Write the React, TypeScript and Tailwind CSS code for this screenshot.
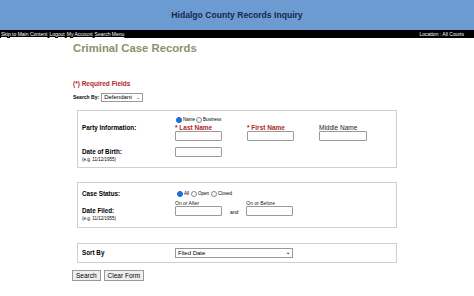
import React from "react";

const F = { fontFamily: '"Liberation Sans", Arial, sans-serif' };

function Radio({ checked }: { checked?: boolean }) {
  return (
    <span
      className={
        "inline-block w-[6px] h-[6px] rounded-full border " +
        (checked ? "border-[#1a5fc4] bg-[#1a73e8]" : "border-[#888] bg-white")
      }
    />
  );
}

function Input({ w = "w-[47px]" }: { w?: string }) {
  return <div className={`${w} h-[10px] border border-[#999] rounded-[1px] bg-white`} />;
}

export default function App() {
  return (
    <div className="w-[474px] h-[296px] bg-white overflow-hidden text-black" style={F}>
      <div className="h-[30px] bg-[#6c9bd2] flex items-center justify-center">
        <span className="text-[8.6px] font-bold text-[#16284a]">Hidalgo County Records Inquiry</span>
      </div>
      <div className="h-[8px] bg-black flex items-center justify-between text-white text-[5px] leading-none px-[1px]">
        <div className="flex gap-[2px]">
          <span className="underline">Skip to Main Content</span>
          <span className="underline">Logout</span>
          <span className="underline">My Account</span>
          <span className="underline">Search Menu</span>
        </div>
        <span className="mr-[9px]">Location : All Courts</span>
      </div>
      <div className="pl-[73px]">
        <div className="mt-[3px] text-[11.3px] font-bold text-[#8f8f6c] leading-[14px]">Criminal Case Records</div>
        <div className="mt-[25px] text-[6.5px] font-bold text-[#b3262b] leading-[8px]">(*) Required Fields</div>
        <div className="mt-[5px] flex items-center gap-[2px]">
          <span className="text-[5px] font-bold">Search By:</span>
          <div className="h-[9px] w-[42px] border border-[#999] flex items-center justify-between px-[2px] text-[6px]">
            <span>Defendant</span>
            <span className="text-[5px]">&#8964;</span>
          </div>
        </div>
        {/* Box 1 */}
        <div className="ml-[4px] mt-[8px] w-[320px] h-[58px] border border-[#cfcfcf] flex flex-col px-[4px]">
          <div className="flex mt-[6px]">
            <div className="w-[93px] text-[6.3px] font-bold pt-[6px]">Party Information:</div>
            <div className="flex flex-col">
              <div className="flex items-center gap-[1px] text-[4.5px] leading-none ml-[1px]">
                <Radio checked />
                <span>Name</span>
                <Radio />
                <span>Business</span>
              </div>
              <div className="flex gap-[25px] mt-[1px]">
                <div className="flex flex-col">
                  <span className="text-[6.5px] font-bold text-[#b3262b] leading-[7px]">* Last Name</span>
                  <Input />
                </div>
                <div className="flex flex-col">
                  <span className="text-[6.5px] font-bold text-[#b3262b] leading-[7px]">* First Name</span>
                  <Input />
                </div>
                <div className="flex flex-col">
                  <span className="text-[6.5px] leading-[7px] text-[#222]">Middle Name</span>
                  <Input w="w-[48px]" />
                </div>
              </div>
            </div>
          </div>
          <div className="flex mt-[6px]">
            <div className="w-[93px] flex flex-col">
              <span className="text-[6.3px] font-bold leading-[8px] mt-[1px]">Date of Birth:</span>
              <span className="text-[4.5px] leading-[6px] mt-[1px]">(e.g. 11/12/1955)</span>
            </div>
            <Input />
          </div>
        </div>
        {/* Box 2 */}
        <div className="ml-[4px] mt-[14px] w-[320px] h-[46px] border border-[#cfcfcf] flex flex-col px-[4px]">
          <div className="flex mt-[7px] items-center">
            <div className="w-[93px] text-[6.3px] font-bold leading-[8px]">Case Status:</div>
            <div className="flex items-center gap-[1px] text-[4.5px] leading-none ml-[2px]">
              <Radio checked />
              <span className="mr-[1px]">All</span>
              <Radio />
              <span className="mr-[1px]">Open</span>
              <Radio />
              <span>Closed</span>
            </div>
          </div>
          <div className="flex mt-[2px]">
            <div className="w-[93px] flex flex-col pt-[7px]">
              <span className="text-[6.3px] font-bold leading-[8px]">Date Filed:</span>
              <span className="text-[4.5px] leading-[6px] mt-[1px]">(e.g. 11/12/1955)</span>
            </div>
            <div className="flex flex-col">
              <span className="text-[5px] leading-[6px] text-[#222]">On or After</span>
              <Input />
            </div>
            <span className="text-[5px] mx-[8px] mt-[9px]">and</span>
            <div className="flex flex-col">
              <span className="text-[5px] leading-[6px] text-[#222]">On or Before</span>
              <Input />
            </div>
          </div>
        </div>
        {/* Box 3 */}
        <div className="ml-[4px] mt-[15px] w-[320px] h-[20px] border border-[#cfcfcf] flex items-center px-[4px]">
          <div className="w-[93px] text-[6.3px] font-bold">Sort By</div>
          <div className="h-[10px] w-[118px] border border-[#999] flex items-center justify-between px-[2px] text-[6px]">
            <span>Filed Date</span>
            <span className="text-[5px] font-bold">&#8964;</span>
          </div>
        </div>
        <div className="flex gap-[3px] mt-[7px] -ml-[1px]">
          <div className="h-[11px] px-[3px] border border-[#999] bg-[#efefef] text-[6.5px] flex items-center">Search</div>
          <div className="h-[11px] px-[3px] border border-[#999] bg-[#efefef] text-[6.5px] flex items-center">Clear Form</div>
        </div>
      </div>
    </div>
  );
}
